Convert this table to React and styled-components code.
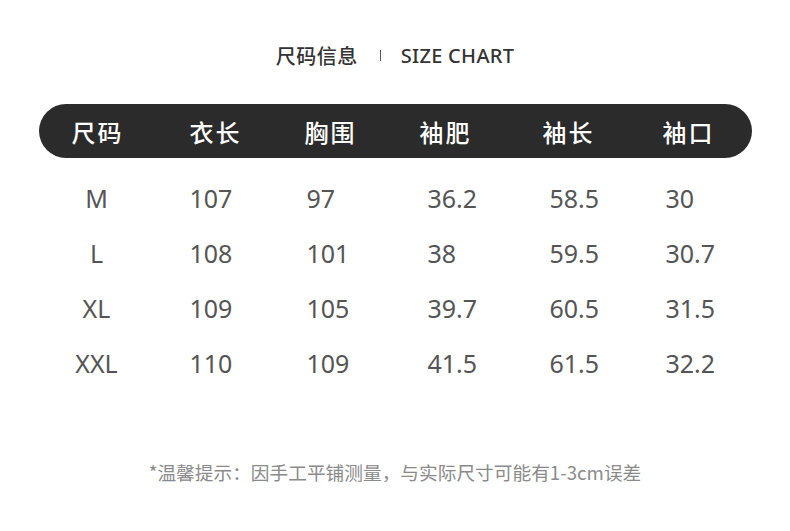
import React from "react";
import styled, { createGlobalStyle } from "styled-components";

const Global = createGlobalStyle`
  body {
    margin: 0;
    background: #ffffff;
    font-family: "Noto Sans", "Noto Sans CJK SC", sans-serif;
  }
`

const Page = styled.div`
  width: 790px;
  height: 531px;
  display: flex;
  flex-direction: column;
  align-items: center;
  background: #ffffff;
`

const Title = styled.div`
  margin-top: 43px;
  height: 24px;
  display: flex;
  align-items: center;
  gap: 20px;
  color: #333333;
`

const TitleCn = styled.span`
  font-family: "Noto Sans CJK SC", sans-serif;
  font-size: 20px;
  font-weight: 500;
  letter-spacing: 0.5px;
`

const Divider = styled.span`
  width: 1px;
  height: 11px;
  background: #555555;
  margin-left: 2px;
`

const TitleEn = styled.span`
  font-family: "Noto Sans", sans-serif;
  font-size: 20px;
  font-weight: 500;
  letter-spacing: 0.3px;
`

const Table = styled.div`
  width: 713px;
  margin-top: 37px;
  display: flex;
  flex-direction: column;
`

const Cols = styled.div`
  display: grid;
  grid-template-columns: 151px 115px 115px 123px 120px 1fr;
  align-items: center;
`

const HeadBar = styled(Cols)`
  height: 54px;
  border-radius: 27px;
  background: #2b2b2b;
`

const HeadCell = styled.div`
  font-family: "Noto Sans CJK SC", sans-serif;
  font-size: 24px;
  font-weight: 500;
  color: #ffffff;
  letter-spacing: 2px;
  text-align: ${(p) => (p.$center ? "center" : "left")};
  padding-right: ${(p) => (p.$center ? "33px" : "0")};
`

const Body = styled.div`
  margin-top: 12px;
  display: flex;
  flex-direction: column;
`

const Row = styled(Cols)`
  height: 55px;
`

const Cell = styled.div`
  font-family: "Noto Sans", sans-serif;
  font-size: 25px;
  color: #555555;
  text-align: ${(p) => (p.$center ? "center" : "left")};
  padding-left: ${(p) => (p.$center ? "0" : `${p.$indent || 0}px`)};
  padding-right: ${(p) => (p.$center ? "35px" : "0")};
`

const Note = styled.div`
  margin-top: 70px;
  font-family: "Noto Sans CJK SC", sans-serif;
  font-size: 18.7px;
  color: #8a8a8a;
  line-height: 24px;
`

const heads = ["尺码", "衣长", "胸围", "袖肥", "袖长", "袖口"]
const indents = [0, 0, 2, 8, 7, 3]

const rows = [
  ["M", "107", "97", "36.2", "58.5", "30"],
  ["L", "108", "101", "38", "59.5", "30.7"],
  ["XL", "109", "105", "39.7", "60.5", "31.5"],
  ["XXL", "110", "109", "41.5", "61.5", "32.2"],
]

export default function App() {
  return (
    <>
      <Global />
      <Page>
        <Title>
          <TitleCn>尺码信息</TitleCn>
          <Divider />
          <TitleEn>SIZE CHART</TitleEn>
        </Title>
        <Table>
          <HeadBar>
            {heads.map((h, i) => (
              <HeadCell key={h} $center={i === 0}>{h}</HeadCell>
            ))}
          </HeadBar>
          <Body>
            {rows.map((r) => (
              <Row key={r[0]}>
                {r.map((v, i) => (
                  <Cell key={i} $center={i === 0} $indent={indents[i]}>{v}</Cell>
                ))}
              </Row>
            ))}
          </Body>
        </Table>
        <Note>*温馨提示：因手工平铺测量，与实际尺寸可能有1-3cm误差</Note>
      </Page>
    </>
  )
}
